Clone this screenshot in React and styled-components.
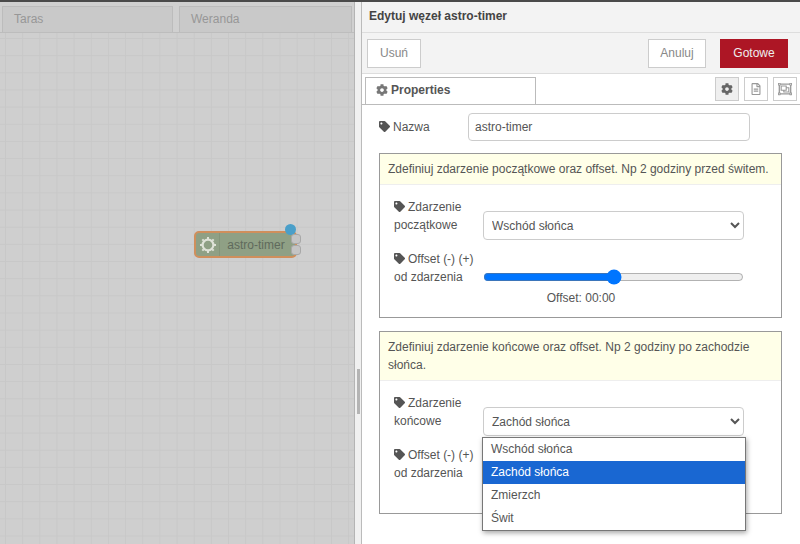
import React from 'react'
import styled, { createGlobalStyle } from 'styled-components'
import { FaCog, FaTag, FaRegFileAlt, FaRegObjectGroup } from 'react-icons/fa'

const GlobalStyle = createGlobalStyle`
  html, body {
    margin: 0;
    padding: 0;
    background: #fff;
  }
  * {
    box-sizing: border-box;
  }
`

const Page = styled.div`
  width: 800px;
  height: 544px;
  overflow: hidden;
  display: flex;
  flex-direction: column;
  font-family: "Liberation Sans", Arial, sans-serif;
  font-size: 12px;
  color: #555;
`

const TopBar = styled.div`
  flex: 0 0 2px;
  background: #4a4a4a;
`

const Main = styled.div`
  flex: 1;
  display: flex;
  min-height: 0;
`

const Workspace = styled.div`
  flex: 0 0 355px;
  display: flex;
  flex-direction: column;
  background: #cfcfcf;
  border-right: 1px solid #b4b4b4;
`

const WsTabs = styled.div`
  flex: 0 0 31px;
  display: flex;
  gap: 6px;
  padding: 4px 2px 0 2px;
  background: #d0d0d0;
  border-bottom: 1px solid #bdbdbd;
`

const WsTab = styled.div`
  flex: ${(p) => (p.$width ? `0 0 ${p.$width}px` : '1')};
  height: 26px;
  padding: 0 11px;
  line-height: 25px;
  background: #c9c9c9;
  border: 1px solid #bcbcbc;
  border-bottom: 0;
  color: #979797;
`

const Canvas = styled.div`
  position: relative;
  flex: 1;
  background-color: #cfcfcf;
  background-image:
    linear-gradient(to right, #c8c8c8 1px, transparent 1px),
    linear-gradient(to bottom, #c8c8c8 1px, transparent 1px);
  background-size: 17.17px 17.17px;
  background-position: 5px 5px;
`

const Node = styled.div`
  position: absolute;
  left: 194px;
  top: 198px;
  width: 103px;
  height: 27px;
  display: flex;
  align-items: center;
  background: #8fa085;
  border: 2px solid #d08f5c;
  border-radius: 5px;
`

const NodeIcon = styled.div`
  flex: 0 0 24px;
  height: 100%;
  display: flex;
  align-items: center;
  justify-content: center;
  border-right: 1px solid #84957a;
`

const NodeLabel = styled.span`
  flex: 1;
  padding-right: 3px;
  text-align: center;
  color: #5f6a5c;
  white-space: nowrap;
`

const Port = styled.span`
  position: absolute;
  right: -6px;
  top: ${(p) => p.$top}px;
  width: 10px;
  height: 10px;
  background: #c4c4c4;
  border: 1px solid #a8a8a8;
  border-radius: 3px;
`

const StatusDot = styled.span`
  position: absolute;
  right: -1px;
  top: -9px;
  width: 11px;
  height: 11px;
  background: #4a9fc9;
  border-radius: 50%;
`

const Splitter = styled.div`
  flex: 0 0 6px;
  display: flex;
  align-items: center;
  justify-content: center;
  background: #f0f0f0;
`

const Grip = styled.div`
  width: 3px;
  height: 45px;
  margin-top: 236px;
  background: #b4b4b4;
`

const Tray = styled.div`
  flex: 1;
  display: flex;
  flex-direction: column;
  background: #fff;
  border-left: 1px solid #bbb;
`

const TrayHeader = styled.div`
  flex: 0 0 31px;
  padding: 0 7px;
  line-height: 29px;
  background: #f3f3f3;
  border-bottom: 1px solid #ddd;
  font-weight: bold;
  color: #444;
`

const Toolbar = styled.div`
  flex: 0 0 41px;
  display: flex;
  align-items: center;
  justify-content: space-between;
  padding: 0 12px 0 5px;
  background: #f3f3f3;
  border-bottom: 1px solid #ddd;
`

const Actions = styled.div`
  display: flex;
  gap: 14px;
`

const Button = styled.button`
  width: ${(p) => p.$width}px;
  height: 29px;
  padding: 0;
  font: inherit;
  color: ${(p) => (p.$primary ? '#eee' : '#888')};
  background: ${(p) => (p.$primary ? '#ad1625' : '#fff')};
  border: 1px solid ${(p) => (p.$primary ? '#ad1625' : '#ccc')};
`

const TabBar = styled.div`
  flex: 0 0 29px;
  display: flex;
  justify-content: space-between;
  padding: 3px 3px 0 3px;
  border-bottom: 1px solid #bbb;
`

const Tab = styled.div`
  width: 171px;
  height: 27px;
  padding: 0 0 2px 10px;
  display: flex;
  align-items: center;
  gap: 3px;
  background: #fff;
  border: 1px solid #bbb;
  border-bottom: 0;
  font-weight: bold;
  color: #555;

  svg {
    color: #777;
  }
`

const IconTabs = styled.div`
  display: flex;
  gap: 5px;
`

const IconTab = styled.div`
  width: 24px;
  height: 24px;
  display: flex;
  align-items: center;
  justify-content: center;
  font-size: ${(p) => p.$size || 12}px;
  color: ${(p) => (p.$active ? '#666' : '#999')};
  background: ${(p) => (p.$active ? '#efefef' : '#fff')};
  border: 1px solid #ccc;
`

const Form = styled.div`
  position: relative;
  padding: 8px 18px 0 17px;
`

const NameRow = styled.div`
  display: flex;
  align-items: center;
  height: 28px;
`

const Label = styled.label`
  display: block;
  flex: 0 0 ${(p) => p.$width}px;
  padding-top: 1px;
  line-height: 17.5px;
  color: #555;

  svg {
    margin-right: 3px;
    font-size: 11px;
    vertical-align: -1px;
  }
`

const TextInput = styled.input`
  width: 282px;
  height: 28px;
  padding: 0 6px;
  font: inherit;
  color: #555;
  border: 1px solid #ccc;
  border-radius: 4px;
  outline: none;
`

const Box = styled.div`
  position: relative;
  margin-top: ${(p) => p.$gap}px;
  height: ${(p) => p.$height}px;
  border: 1px solid #999;
`

const Tip = styled.div`
  padding: 6px 8px;
  line-height: 18px;
  background: #ffffe8;
  border-bottom: 1px solid #eee;
  color: #555;
`

const BoxBody = styled.div`
  padding: 13px 37px 0 14px;
`

const Row = styled.div`
  display: flex;
  align-items: flex-start;
  margin-bottom: 10px;
`

const SelectBox = styled.select`
  flex: 1;
  height: 29px;
  margin-top: 13px;
  padding: 0 4px;
  font: inherit;
  color: #555;
  background: #fff;
  border: 1px solid #ccc;
  border-radius: 4px;
  outline: none;
`

const SliderCell = styled.div`
  flex: 1;
  text-align: center;
`

const Slider = styled.input`
  display: block;
  width: 100%;
  height: 16px;
  margin: 19px 0 0;
`

const OffsetText = styled.div`
  margin-top: 4px;
  padding-right: 65px;
  line-height: 18px;
`

const Dropdown = styled.ul`
  position: absolute;
  left: 102px;
  top: 105px;
  width: 264px;
  margin: 0;
  padding: 0;
  list-style: none;
  background: #fff;
  border: 1px solid #777;
  box-shadow: 1px 2px 5px rgba(0, 0, 0, 0.35);
`

const Option = styled.li`
  height: 23px;
  padding: 0 8px;
  line-height: 22px;
  color: ${(p) => (p.$selected ? '#fff' : '#555')};
  background: ${(p) => (p.$selected ? '#1967d2' : 'transparent')};
`

const events = ['Wschód słońca', 'Zachód słońca', 'Zmierzch', 'Świt']

const ticks = [0, 45, 90, 135, 180, 225, 270, 315]

function SunIcon() {
  return (
    <svg width="18" height="18" viewBox="0 0 18 18">
      <circle cx="9" cy="9" r="5.4" fill="none" stroke="#dfe2d8" strokeWidth="2.2" />
      {ticks.map((a) => (
        <line
          key={a}
          x1="9"
          y1="1"
          x2="9"
          y2="3"
          stroke="#dfe2d8"
          strokeWidth="2"
          transform={`rotate(${a} 9 9)`}
        />
      ))}
    </svg>
  )
}

function EventBox({ gap, height, tip, label, value, open }) {
  return (
    <Box $gap={gap} $height={height}>
      <Tip>{tip}</Tip>
      <BoxBody>
        <Row>
          <Label $width={89}><FaTag />Zdarzenie<br />{label}</Label>
          <SelectBox defaultValue={value}>
            {events.map((e) => <option key={e}>{e}</option>)}
          </SelectBox>
        </Row>
        <Row>
          <Label $width={89}><FaTag />Offset (-) (+)<br />od zdarzenia</Label>
          <SliderCell>
            <Slider type="range" min="-100" max="100" defaultValue="0" />
            <OffsetText>Offset: 00:00</OffsetText>
          </SliderCell>
        </Row>
      </BoxBody>
      {open && (
        <Dropdown>
          {events.map((e) => <Option key={e} $selected={e === value}>{e}</Option>)}
        </Dropdown>
      )}
    </Box>
  )
}

export default function App() {
  return (
    <Page>
      <GlobalStyle />
      <TopBar />
      <Main>
        <Workspace>
          <WsTabs>
            <WsTab $width={171}>Taras</WsTab>
            <WsTab>Weranda</WsTab>
          </WsTabs>
          <Canvas>
            <Node>
              <NodeIcon><SunIcon /></NodeIcon>
              <NodeLabel>astro-timer</NodeLabel>
              <StatusDot />
              <Port $top={1} />
              <Port $top={12} />
            </Node>
          </Canvas>
        </Workspace>
        <Splitter><Grip /></Splitter>
        <Tray>
          <TrayHeader>Edytuj węzeł astro-timer</TrayHeader>
          <Toolbar>
            <Button $width={54}>Usuń</Button>
            <Actions>
              <Button $width={58}>Anuluj</Button>
              <Button $width={68} $primary>Gotowe</Button>
            </Actions>
          </Toolbar>
          <TabBar>
            <Tab><FaCog />Properties</Tab>
            <IconTabs>
              <IconTab $active><FaCog /></IconTab>
              <IconTab><FaRegFileAlt /></IconTab>
              <IconTab $size={14}><FaRegObjectGroup /></IconTab>
            </IconTabs>
          </TabBar>
          <Form>
            <NameRow>
              <Label $width={89}><FaTag />Nazwa</Label>
              <TextInput defaultValue="astro-timer" />
            </NameRow>
            <EventBox
              gap={12}
              height={165}
              tip="Zdefiniuj zdarzenie początkowe oraz offset. Np 2 godziny przed świtem."
              label="początkowe"
              value="Wschód słońca"
            />
            <EventBox
              gap={13}
              height={183}
              tip="Zdefiniuj zdarzenie końcowe oraz offset. Np 2 godziny po zachodzie słońca."
              label="końcowe"
              value="Zachód słońca"
              open
            />
          </Form>
        </Tray>
      </Main>
    </Page>
  )
}
